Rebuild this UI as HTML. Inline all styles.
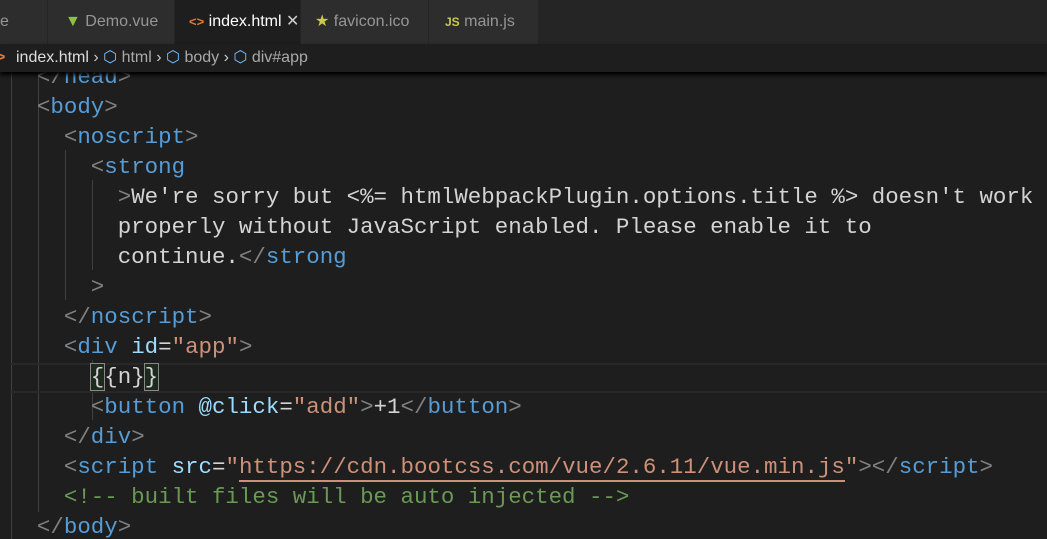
<!DOCTYPE html>
<html><head><style>
body{margin:0;width:1047px;height:539px;overflow:hidden;background:#1e1e1e;font-family:"Liberation Sans",sans-serif;position:relative}
.tabs{position:absolute;top:0;left:0;width:1047px;height:44px;background:#252526}
.tab{position:absolute;top:0;height:44px;background:#2d2d2d;color:#969696;font-size:16px;line-height:44px;border-right:1px solid #252526;box-sizing:border-box;white-space:nowrap;overflow:hidden}
.tab.act{background:#1e1e1e;color:#fff}
.crumb{position:absolute;top:44px;left:0;width:1047px;height:28px;background:#1e1e1e;color:#a9a9a9;font-size:16px;line-height:28px;z-index:2;box-shadow:0 3px 4px #000;white-space:nowrap}
.ed{position:absolute;top:72px;left:0;width:1047px;height:467px;overflow:hidden}
.code{position:absolute;top:-10px;left:10px;font-family:"Liberation Mono",monospace;font-size:22.45px;line-height:30px;white-space:pre;color:#d4d4d4}
.b{color:#808080}.t{color:#569cd6}.a{color:#9cdcfe}.s{color:#ce9178}.c{color:#6a9955}
.g{position:absolute;width:1px;background:#404040}
.cur{position:absolute;left:10px;top:291px;width:1037px;height:26px;border-top:2px solid #282828;border-bottom:2px solid #282828}
.bx{outline:1px solid #888;background:#1f2a1f}
</style></head><body>
<div class="tabs">
<div class="tab" style="left:0;width:48px;padding-left:0">e</div>
<div class="tab" style="left:48px;width:127px;padding-left:17px"><span style="color:#8dc149;font-size:16px">▼</span> Demo.vue</div>
<div class="tab act" style="left:175px;width:126px;padding-left:14px"><span style="color:#e37933;font-weight:bold;font-size:13px">&lt;&gt;</span> index.html <span style="color:#ccc">✕</span></div>
<div class="tab" style="left:301px;width:128px;padding-left:14px"><span style="color:#cbcb41">★</span> favicon.ico</div>
<div class="tab" style="left:429px;width:110px;padding-left:16px"><span style="color:#cbcb41;font-size:12px;font-weight:bold">JS</span> main.js</div>
</div>
<div class="crumb"><span style="position:absolute;left:-4px;color:#e37933;font-weight:bold">&gt;</span><span style="position:absolute;left:16px;color:#ddd">index.html <span style="color:#ccc">›</span> <span style="color:#75beff">⬡</span> <span style="color:#a9a9a9">html</span> <span style="color:#ccc">›</span> <span style="color:#75beff">⬡</span> <span style="color:#a9a9a9">body</span> <span style="color:#ccc">›</span> <span style="color:#75beff">⬡</span> <span style="color:#a9a9a9">div#app</span></span></div>
<div class="ed">
<div class="g" style="left:11px;top:0;height:467px"></div>
<div class="g" style="left:38px;top:0;height:440px"></div>
<div class="g" style="left:65px;top:78px;height:150px"></div>
<div class="g" style="left:92px;top:108px;height:90px"></div>
<div class="g" style="left:92px;top:288px;height:60px"></div>
<div class="cur"></div>
<div class="code"><span class="b">  &lt;/</span><span class="t">head</span><span class="b">&gt;</span>
<span class="b">  &lt;</span><span class="t">body</span><span class="b">&gt;</span>
<span class="b">    &lt;</span><span class="t">noscript</span><span class="b">&gt;</span>
<span class="b">      &lt;</span><span class="t">strong</span>
<span class="b">        &gt;</span>We're sorry but &lt;%= htmlWebpackPlugin.options.title %&gt; doesn't work
        properly without JavaScript enabled. Please enable it to
        continue.<span class="b">&lt;/</span><span class="t">strong</span>
<span class="b">      &gt;</span>
<span class="b">    &lt;/</span><span class="t">noscript</span><span class="b">&gt;</span>
<span class="b">    &lt;</span><span class="t">div</span> <span class="a">id</span>=<span class="s">"app"</span><span class="b">&gt;</span>
      <span class="bx">{</span>{n}<span class="bx">}</span>
<span class="b">      &lt;</span><span class="t">button</span> <span class="a">@click</span>=<span class="s">"add"</span><span class="b">&gt;</span>+1<span class="b">&lt;/</span><span class="t">button</span><span class="b">&gt;</span>
<span class="b">    &lt;/</span><span class="t">div</span><span class="b">&gt;</span>
<span class="b">    &lt;</span><span class="t">script</span> <span class="a">src</span>=<span class="s">"<span style="border-bottom:2px solid #ce9178">https://cdn.bootcss.com/vue/2.6.11/vue.min.js</span>"</span><span class="b">&gt;&lt;/</span><span class="t">script</span><span class="b">&gt;</span>
<span class="c">    &lt;!-- built files will be auto injected --&gt;</span>
<span class="b">  &lt;/</span><span class="t">body</span><span class="b">&gt;</span></div>
</div>
</body></html>
